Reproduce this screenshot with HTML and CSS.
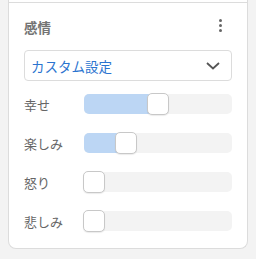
FILE: index.html
```html
<!DOCTYPE html>
<html lang="ja">
<head>
  <meta charset="UTF-8" />
  <title>感情</title>
  <link rel="stylesheet" href="styles.css">
</head>
<body>
  <div class="panel">
    <div class="panel-head">
      <span class="title">感情</span>
      <span class="kebab"><i></i><i></i><i></i></span>
    </div>

    <div class="select">
      <span>カスタム設定</span>
      <svg width="16" height="10" viewBox="0 0 16 10">
        <path d="M2 2 L8 7.5 L14 2" fill="none" stroke="#555" stroke-width="1.8" />
      </svg>
    </div>

    <div class="sliders">
      <div class="row">
        <label>幸せ</label>
        <div class="track" style="--v: 0.5"><div class="fill"></div><div class="thumb"></div></div>
      </div>
      <div class="row">
        <label>楽しみ</label>
        <div class="track" style="--v: 0.25"><div class="fill"></div><div class="thumb"></div></div>
      </div>
      <div class="row">
        <label>怒り</label>
        <div class="track" style="--v: 0"><div class="fill"></div><div class="thumb"></div></div>
      </div>
      <div class="row">
        <label>悲しみ</label>
        <div class="track" style="--v: 0"><div class="fill"></div><div class="thumb"></div></div>
      </div>
    </div>
  </div>
</body>
</html>
```

FILE: styles.css
```css
body {
  margin: 0;
  background: #f3f3f3;
  font-family: "Noto Sans CJK JP", "Noto Sans", sans-serif;
}
.panel {
  margin-left: 8px;
  width: 238px;
  padding-top: 2px;
  background: #fff;
  border: 1px solid #dcdcdc;
  border-top: none;
  border-radius: 0 0 8px 8px;
  padding-bottom: 17px;
}
.panel-head {
  border-top: 1px solid #dcdcdc;
  height: 47px;
  padding: 0 15px;
  display: flex;
  align-items: center;
  justify-content: space-between;
}
.title {
  font-size: 13.5px;
  font-weight: bold;
  color: #747474;
}
.kebab {
  display: flex;
  flex-direction: column;
  gap: 2px;
  margin-right: 10px;
  margin-top: -2px;
}
.kebab i {
  width: 3px;
  height: 3px;
  border-radius: 50%;
  background: #666;
}
.select {
  margin: 0 15px;
  height: 29px;
  border: 1px solid #dcdcdc;
  border-radius: 4px;
  display: flex;
  align-items: center;
  justify-content: space-between;
  padding: 0 10px 0 6px;
  font-size: 13.5px;
  color: #2b74cf;
}
.select svg {
  margin-top: 1px;
}
.sliders {
  margin-top: 13px;
  padding: 0 15px;
  display: flex;
  flex-direction: column;
  gap: 19px;
}
.row {
  display: flex;
  align-items: center;
  height: 20px;
}
.row label {
  width: 60px;
  font-size: 13px;
  color: #666;
}
.track {
  position: relative;
  flex: 1;
  height: 20px;
  background: #f3f3f3;
  border-radius: 5px;
}
.fill {
  height: 100%;
  width: calc(var(--v) * (100% - 21px) + 4px);
  background: #bcd6f4;
  border-radius: 5px 0 0 5px;
}
.track[style="--v: 0"] .fill {
  display: none;
}
.thumb {
  position: absolute;
  top: -1px;
  left: calc(var(--v) * (100% - 21px) - 1px);
  width: 20px;
  height: 20px;
  background: #fff;
  border: 1px solid #c8c8c8;
  border-radius: 5px;
  box-shadow: 0 1px 1px rgba(0,0,0,0.08);
}
```
